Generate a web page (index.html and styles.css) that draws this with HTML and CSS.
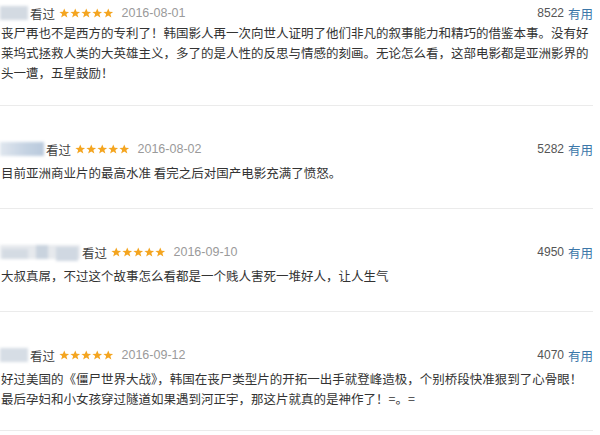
FILE: index.html
```html
<!DOCTYPE html>
<html lang="zh-CN">
<head>
<meta charset="utf-8">
<link rel="stylesheet" href="styles.css">
</head>
<body>
<svg width="0" height="0" class="defs">
  <defs>
    <symbol id="star" viewBox="0 0 20 20">
      <polygon points="10,1 12.6,7.2 19.3,7.4 14,11.6 15.9,18.2 10,14.4 4.1,18.2 6,11.6 0.7,7.4 7.4,7.2"/>
    </symbol>
  </defs>
</svg>
<div class="list">
  <div class="item first">
    <div class="head">
      <span class="user u1"></span>
      <span class="seen">看过</span>
      <span class="stars"><svg><use href="#star"/></svg><svg><use href="#star"/></svg><svg><use href="#star"/></svg><svg><use href="#star"/></svg><svg><use href="#star"/></svg></span>
      <span class="date">2016-08-01</span>
      <span class="votes"><span class="num">8522</span><span class="useful">有用</span></span>
    </div>
    <p class="text">丧尸再也不是西方的专利了！韩国影人再一次向世人证明了他们非凡的叙事能力和精巧的借鉴本事。没有好莱坞式拯救人类的大英雄主义，多了的是人性的反思与情感的刻画。无论怎么看，这部电影都是亚洲影界的头一遭，五星鼓励！</p>
  </div>
  <div class="item">
    <div class="head">
      <span class="user u2"></span>
      <span class="seen">看过</span>
      <span class="stars"><svg><use href="#star"/></svg><svg><use href="#star"/></svg><svg><use href="#star"/></svg><svg><use href="#star"/></svg><svg><use href="#star"/></svg></span>
      <span class="date">2016-08-02</span>
      <span class="votes"><span class="num">5282</span><span class="useful">有用</span></span>
    </div>
    <p class="text">目前亚洲商业片的最高水准 看完之后对国产电影充满了愤怒。</p>
  </div>
  <div class="item">
    <div class="head">
      <span class="user u3"><i class="b1"></i><i class="b2"></i><i class="b3"></i></span>
      <span class="seen">看过</span>
      <span class="stars"><svg><use href="#star"/></svg><svg><use href="#star"/></svg><svg><use href="#star"/></svg><svg><use href="#star"/></svg><svg><use href="#star"/></svg></span>
      <span class="date">2016-09-10</span>
      <span class="votes"><span class="num">4950</span><span class="useful">有用</span></span>
    </div>
    <p class="text">大叔真屌，不过这个故事怎么看都是一个贱人害死一堆好人，让人生气</p>
  </div>
  <div class="item last">
    <div class="head">
      <span class="user u4"></span>
      <span class="seen">看过</span>
      <span class="stars"><svg><use href="#star"/></svg><svg><use href="#star"/></svg><svg><use href="#star"/></svg><svg><use href="#star"/></svg><svg><use href="#star"/></svg></span>
      <span class="date">2016-09-12</span>
      <span class="votes"><span class="num">4070</span><span class="useful">有用</span></span>
    </div>
    <p class="text">好过美国的《僵尸世界大战》，韩国在丧尸类型片的开拓一出手就登峰造极，个别桥段快准狠到了心骨眼！最后孕妇和小女孩穿过隧道如果遇到河正宇，那这片就真的是神作了！=。=</p>
  </div>
</div>
</body>
</html>
```

FILE: styles.css
```css
* { box-sizing: border-box; }
html, body { margin: 0; padding: 0; background: #fff; }
body {
  width: 600px;
  height: 435px;
  overflow: hidden;
  font-family: "Noto Sans CJK SC", "Liberation Sans", sans-serif;
  color: #333;
}
.defs { position: absolute; width: 0; height: 0; }
.list { width: 593px; }
.item {
  padding: 33px 0 25px 1px;
  border-bottom: 1px solid #ebebeb;
}
.item.first { padding-top: 3px; padding-bottom: 22px; }
.item.first .head { margin-bottom: 0; }
.item.last { padding-bottom: 21px; }
.head {
  display: flex;
  align-items: center;
  height: 20px;
  margin-bottom: 4px;
  font-size: 12.5px;
}
.user {
  display: block;
  height: 14px;
  margin-left: -1px;
  position: relative;
  filter: blur(1.5px);
}
.u1 { width: 28px; background: #d3dae2; }
.u2 { width: 44px; background: linear-gradient(90deg, #dfe6ee, #c4d2e2 60%, #b9c9dc); }
.u3 { width: 80px; background: #e6e9ed; }
.u3 i { position: absolute; top: 0; height: 14px; }
.u3 .b1 { left: 2px; width: 26px; top: 4px; height: 10px; background: #d4dbe3; }
.u3 .b2 { left: 36px; width: 12px; background: #c9d3de; }
.u3 .b3 { left: 56px; width: 22px; top: 2px; background: #d0d8e2; }
.u4 { width: 28px; background: #d6dde5; }
.seen { color: #444; margin-left: 2px; }
.stars { display: flex; margin-left: 4px; gap: 0.5px; }
.stars svg { width: 10.5px; height: 10.5px; fill: #f4a520; }
.date {
  font-family: "Liberation Sans", Arial, sans-serif;
  font-size: 12.5px;
  color: #9a9a9a;
  margin-left: 8px;
}
.votes { margin-left: auto; display: flex; align-items: center; }
.num {
  font-family: "Liberation Sans", Arial, sans-serif;
  font-size: 12px;
  color: #555;
}
.useful { color: #3b77a9; margin-left: 4px; }
.text {
  margin: 0;
  font-size: 12.5px;
  line-height: 20px;
  color: #333;
}
```
